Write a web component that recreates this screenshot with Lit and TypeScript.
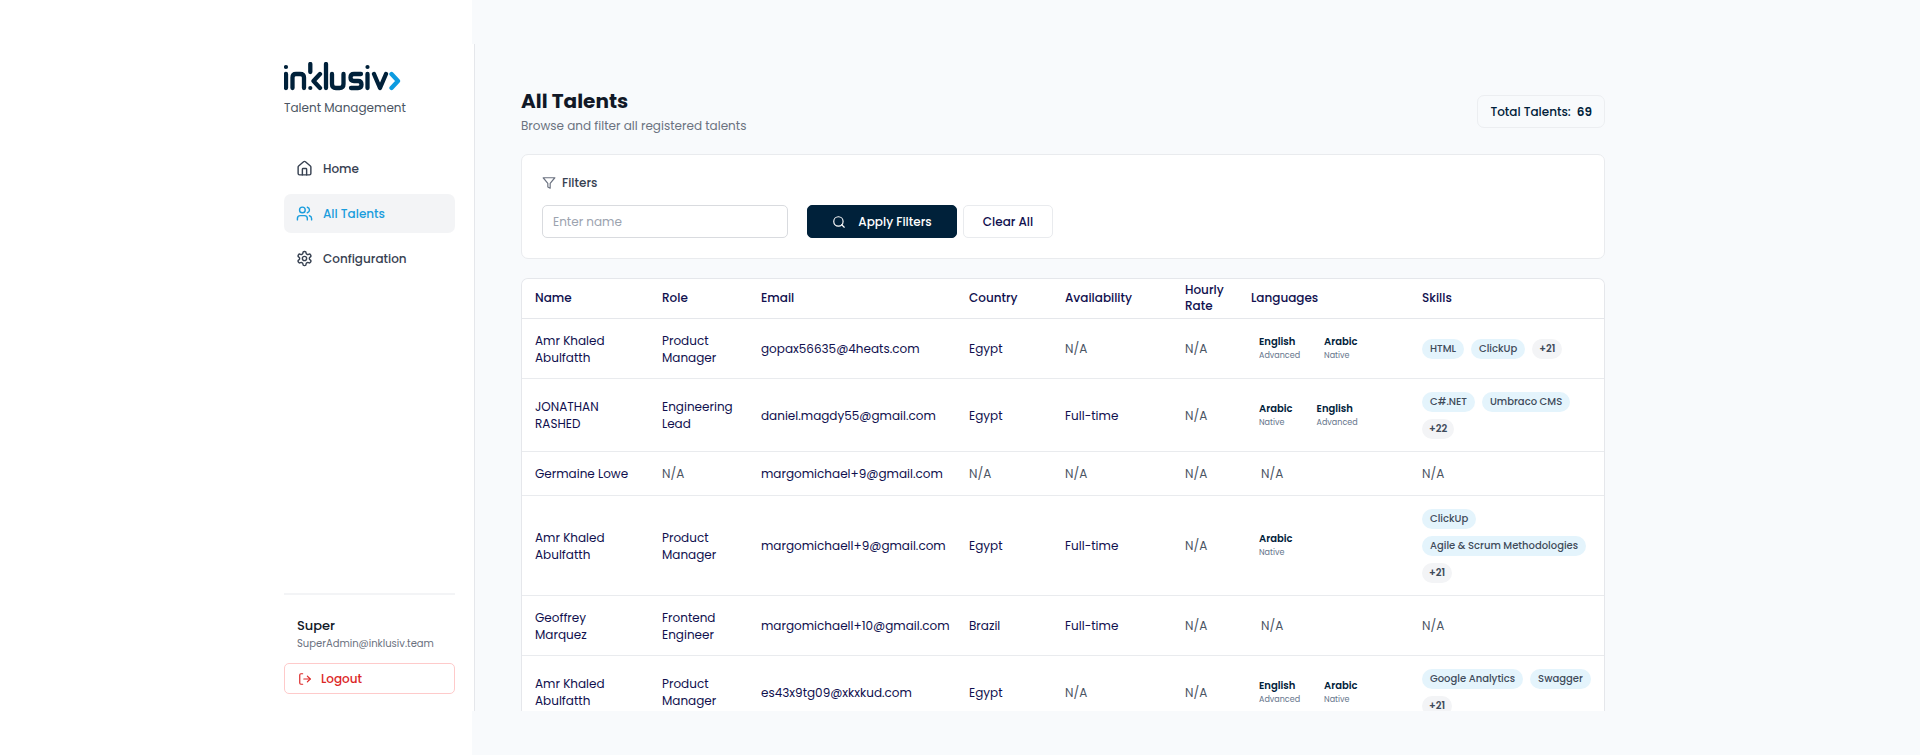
import { LitElement, html, css, svg } from "lit";
import { customElement } from "lit/decorators.js";

interface Lang { name: string; level: string }
interface Talent {
  name: string; role: string; email: string; country: string; availability: string;
  rate: string; languages: Lang[]; skills: string[]; more: number;
}

const NA = "N/A";
const EN: Lang = { name: "English", level: "Advanced" };
const AR: Lang = { name: "Arabic", level: "Native" };

const TALENTS: Talent[] = [
  { name: "Amr Khaled Abulfatth", role: "Product Manager", email: "gopax56635@4heats.com", country: "Egypt", availability: NA, rate: NA, languages: [EN, AR], skills: ["HTML", "ClickUp"], more: 21 },
  { name: "JONATHAN RASHED", role: "Engineering Lead", email: "daniel.magdy55@gmail.com", country: "Egypt", availability: "Full-time", rate: NA, languages: [AR, EN], skills: ["C#.NET", "Umbraco CMS"], more: 22 },
  { name: "Germaine Lowe", role: NA, email: "margomichael+9@gmail.com", country: NA, availability: NA, rate: NA, languages: [], skills: [], more: 0 },
  { name: "Amr Khaled Abulfatth", role: "Product Manager", email: "margomichaell+9@gmail.com", country: "Egypt", availability: "Full-time", rate: NA, languages: [AR], skills: ["ClickUp", "Agile & Scrum Methodologies"], more: 21 },
  { name: "Geoffrey Marquez", role: "Frontend Engineer", email: "margomichaell+10@gmail.com", country: "Brazil", availability: "Full-time", rate: NA, languages: [], skills: [], more: 0 },
  { name: "Amr Khaled Abulfatth", role: "Product Manager", email: "es43x9tg09@xkxkud.com", country: "Egypt", availability: NA, rate: NA, languages: [EN, AR], skills: ["Google Analytics", "Swagger"], more: 21 },
];

const ICONS = {
  home: svg`<path d="M15 21v-8a1 1 0 0 0-1-1h-4a1 1 0 0 0-1 1v8"/><path d="M3 10a2 2 0 0 1 .709-1.528l7-5.999a2 2 0 0 1 2.582 0l7 5.999A2 2 0 0 1 21 10v9a2 2 0 0 1-2 2H5a2 2 0 0 1-2-2z"/>`,
  users: svg`<path d="M16 21v-2a4 4 0 0 0-4-4H6a4 4 0 0 0-4 4v2"/><circle cx="9" cy="7" r="4"/><path d="M22 21v-2a4 4 0 0 0-3-3.87"/><path d="M16 3.13a4 4 0 0 1 0 7.75"/>`,
  settings: svg`<path d="M12.22 2h-.44a2 2 0 0 0-2 2v.18a2 2 0 0 1-1 1.73l-.43.25a2 2 0 0 1-2 0l-.15-.08a2 2 0 0 0-2.73.73l-.22.38a2 2 0 0 0 .73 2.73l.15.1a2 2 0 0 1 1 1.72v.51a2 2 0 0 1-1 1.74l-.15.09a2 2 0 0 0-.73 2.73l.22.38a2 2 0 0 0 2.73.73l.15-.08a2 2 0 0 1 2 0l.43.25a2 2 0 0 1 1 1.73V20a2 2 0 0 0 2 2h.44a2 2 0 0 0 2-2v-.18a2 2 0 0 1 1-1.73l.43-.25a2 2 0 0 1 2 0l.15.08a2 2 0 0 0 2.73-.73l.22-.39a2 2 0 0 0-.73-2.73l-.15-.08a2 2 0 0 1-1-1.74v-.5a2 2 0 0 1 1-1.74l.15-.09a2 2 0 0 0 .73-2.73l-.22-.38a2 2 0 0 0-2.73-.73l-.15.08a2 2 0 0 1-2 0l-.43-.25a2 2 0 0 1-1-1.73V4a2 2 0 0 0-2-2z"/><circle cx="12" cy="12" r="3"/>`,
  logout: svg`<path d="M8 21H5a2 2 0 0 1-2-2V5a2 2 0 0 1 2-2h3"/><path d="m16 17 5-5-5-5"/><path d="M21 12H10"/>`,
  filter: svg`<path d="M22 3H2l8 9.46V19l4 2v-8.54z"/>`,
  search: svg`<circle cx="11" cy="11" r="8"/><path d="m21 21-4.3-4.3"/>`,
};

const icon = (name: keyof typeof ICONS, cls = "") => html`
  <svg class="icon ${cls}" viewBox="0 0 24 24" fill="none" stroke="currentColor" stroke-width="2"
    stroke-linecap="round" stroke-linejoin="round" aria-hidden="true">${ICONS[name]}</svg>`;

@customElement("app-root")
export class AppRoot extends LitElement {
  static styles = css`
    :host {
      display: block;
      font-family: Poppins, Inter, sans-serif;
      font-size: 12px;
      line-height: 17px;
      color: #10104e;
    }
    * { box-sizing: border-box; }
    h1, h2, p { margin: 0; }
    button, input { font: inherit; }
    .page {
      display: grid;
      grid-template-columns: minmax(220px, 472px) minmax(0, 1fr);
      height: 100vh;
      padding: 44px 0;
      background: linear-gradient(90deg, #fff min(472px, 100%), #f8fafc 0);
    }
    .sidebar {
      display: flex;
      flex-direction: column;
      justify-self: end;
      width: 211px;
      margin-right: -3px;
      padding: 18px 19px 17px 20px;
      background: #fff;
      border-right: 1px solid #e5e7eb;
    }
    .logo { display: block; width: 117px; height: 29px; }
    .tagline { margin-top: 8px; color: #4b5563; }
    .nav { display: flex; flex-direction: column; gap: 6px; margin-top: 33px; }
    .link {
      display: flex;
      align-items: center;
      gap: 10px;
      height: 39px;
      padding: 0 12px;
      border-radius: 7px;
      font-weight: 500;
      color: #374151;
      text-decoration: none;
    }
    .link.active { background: #f3f4f6; color: #1a9ddd; }
    .icon { width: 14px; height: 14px; flex: none; }
    .icon.large { width: 17px; height: 17px; }
    .account {
      margin-top: auto;
      padding-top: 22px;
      border-top: 2px solid #f3f4f6;
    }
    .user { padding: 0 13px; }
    .user-name { font-size: 13px; font-weight: 500; line-height: 18px; color: #111827; }
    .user-mail { font-size: 10px; line-height: 17px; color: #6b7280; }
    .logout {
      display: flex;
      align-items: center;
      gap: 9px;
      width: 100%;
      height: 31px;
      margin-top: 11px;
      padding: 0 13px;
      border: 1px solid #fecaca;
      border-radius: 5px;
      background: #fff;
      color: #dc2626;
      font-weight: 500;
    }
    .main {
      display: flex;
      flex-direction: column;
      width: 100%;
      max-width: 1133px;
      min-height: 0;
      padding: 44px 0 0 49px;
      overflow: hidden;
    }
    .head { display: flex; justify-content: space-between; align-items: center; }
    .title { font-size: 20px; font-weight: 700; line-height: 26px; color: #111827; }
    .subtitle { margin-top: 3px; color: #6b7280; }
    .total {
      display: flex;
      gap: 6px;
      padding: 7px 12px;
      border: 1px solid #eceef1;
      border-radius: 7px;
      font-weight: 500;
      color: #00213a;
    }
    .total strong { font-weight: 600; }
    .card {
      margin-top: 20px;
      padding: 19px 20px 20px;
      border: 1px solid #e9ebee;
      border-radius: 7px;
      background: #fff;
    }
    .card-title {
      display: flex;
      align-items: center;
      gap: 6px;
      font-size: 12px;
      font-weight: 500;
      color: #374151;
    }
    .card-title .icon { color: #6b7280; }
    .form { display: flex; margin-top: 14px; height: 33px; }
    .field {
      width: 246px;
      margin-right: 19px;
      padding: 0 10px;
      border: 1px solid #d9dbdf;
      border-radius: 5px;
      background: #fff;
      color: #10104e;
    }
    .field::placeholder { color: #9ca3af; opacity: 1; }
    .btn {
      display: flex;
      align-items: center;
      justify-content: center;
      border: 1px solid #e9ebee;
      border-radius: 5px;
      background: #fff;
      color: #10104e;
      font-weight: 500;
      padding: 0;
      width: 90px;
    }
    .btn.primary {
      gap: 12px;
      width: 150px;
      margin-right: 6px;
      border-color: #00213a;
      background: #00213a;
      color: #fff;
    }
    .table-wrap {
      flex: 1;
      min-height: 0;
      margin-top: 19px;
      overflow: hidden auto;
      scrollbar-width: none;
      border: 1px solid #e5e7eb;
      border-bottom: 0;
      border-radius: 7px 7px 0 0;
      background: #fff;
    }
    .table { width: 100%; border-collapse: collapse; table-layout: fixed; }
    .table th {
      height: 39px;
      padding: 0 13px;
      text-align: left;
      font-weight: 500;
      line-height: 16px;
      border-bottom: 1px solid #e5e7eb;
    }
    .table td {
      height: 44px;
      padding: 13px 13px 12px;
      border-bottom: 1px solid #e9ebee;
      vertical-align: middle;
    }
    .c-name { width: 127px; }
    .c-role { width: 99px; }
    .c-email { width: 208px; }
    .c-country { width: 96px; }
    .c-avail { width: 120px; }
    .c-rate { width: 66px; }
    .c-langs { width: 171px; }
    .na { color: #4b5563; }
    .langs .na { padding-left: 10px; }
    .lang-list { display: flex; gap: 24px; padding-left: 8px; }
    .lang-name { font-size: 10px; font-weight: 600; line-height: 14px; color: #00213a; }
    .lang-level { font-size: 8px; line-height: 13px; color: #64748b; }
    .pills { display: flex; flex-wrap: wrap; gap: 7px; margin-right: -10px; }
    .pill {
      height: 20px;
      padding: 0 8px;
      border-radius: 10px;
      background: #e4f4fc;
      color: #3f4b5a;
      font-size: 10px;
      font-weight: 500;
      line-height: 20px;
      white-space: nowrap;
    }
    .pill.more { padding: 0 7px; background: #f3f4f6; font-weight: 600; }
  `;

  private text(value: string) {
    return value === NA ? html`<span class="na">${NA}</span>` : value;
  }

  private row(t: Talent) {
    return html`<tr>
      <td>${t.name}</td>
      <td>${this.text(t.role)}</td>
      <td>${t.email}</td>
      <td>${this.text(t.country)}</td>
      <td>${this.text(t.availability)}</td>
      <td>${this.text(t.rate)}</td>
      <td class="langs">${t.languages.length
        ? html`<div class="lang-list">${t.languages.map((l) => html`
            <div><div class="lang-name">${l.name}</div><div class="lang-level">${l.level}</div></div>`)}</div>`
        : this.text(NA)}</td>
      <td>${t.skills.length
        ? html`<div class="pills">${t.skills.map((s) => html`<span class="pill">${s}</span>`)}<span class="pill more">+${t.more}</span></div>`
        : this.text(NA)}</td>
    </tr>`;
  }

  render() {
    return html`
      <div class="page">
        <aside class="sidebar">
          <svg class="logo" viewBox="0 0 117 29" role="img" aria-label="inklusiv" fill="none"
            stroke="#00213a" stroke-width="4.3" stroke-linecap="round" stroke-linejoin="round">
            <path d="M2 12V26M8.500 26V15.500Q8.500 12 12 12H16Q20 12 20 15.500V26M26.300 2V10M36 12L29.500 19L36 26M42 2V26M48 12V22Q48 26 52 26H55.500Q59.500 26 59.500 22V12M77 12H70Q66.500 12 66.500 15.500Q66.500 19 70 19H74Q77.500 19 77.500 22.500Q77.500 26 74 26H67M83.500 12V26M90 12L96 26L102 12"/>
            <path d="M107.500 12L114 19L107.500 26" stroke="#0d9be0"/>
            <g fill="#00213a" stroke="none"><circle cx="2" cy="5" r="2.100"/><circle cx="83.500" cy="5" r="2.100"/><circle cx="26.300" cy="26" r="2.100"/></g>
          </svg>
          <p class="tagline">Talent Management</p>
          <nav class="nav">
            <a class="link" href="#home">${icon("home", "large")}Home</a>
            <a class="link active" href="#talents" aria-current="page">${icon("users", "large")}All Talents</a>
            <a class="link" href="#configuration">${icon("settings", "large")}Configuration</a>
          </nav>
          <div class="account">
            <div class="user">
              <p class="user-name">Super</p>
              <p class="user-mail">SuperAdmin@inklusiv.team</p>
            </div>
            <button class="logout" type="button">${icon("logout")}Logout</button>
          </div>
        </aside>
        <main class="main">
          <header class="head">
            <div>
              <h1 class="title">All Talents</h1>
              <p class="subtitle">Browse and filter all registered talents</p>
            </div>
            <div class="total"><span>Total Talents:</span><strong>69</strong></div>
          </header>
          <section class="card">
            <h2 class="card-title">${icon("filter")}Filters</h2>
            <form class="form" @submit=${(e: Event) => e.preventDefault()}>
              <input class="field" type="text" name="name" placeholder="Enter name" aria-label="Name" />
              <button class="btn primary" type="submit">${icon("search")}Apply Filters</button>
              <button class="btn" type="reset">Clear All</button>
            </form>
          </section>
          <div class="table-wrap">
            <table class="table">
              <thead><tr>
                <th class="c-name">Name</th>
                <th class="c-role">Role</th>
                <th class="c-email">Email</th>
                <th class="c-country">Country</th>
                <th class="c-avail">Availability</th>
                <th class="c-rate">Hourly Rate</th>
                <th class="c-langs">Languages</th>
                <th>Skills</th>
              </tr></thead>
              <tbody>${TALENTS.map((t) => this.row(t))}</tbody>
            </table>
          </div>
        </main>
      </div>`;
  }
}
